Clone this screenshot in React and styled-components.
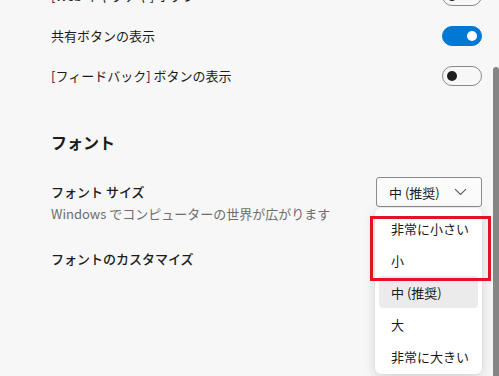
import React from "react";
import styled, { createGlobalStyle } from "styled-components";

const Global = createGlobalStyle`
  html, body { margin: 0; padding: 0; }
  body {
    background: #f7f7f7;
    font-family: "Noto Sans CJK JP", "Noto Sans", sans-serif;
    color: #1b1b1b;
    overflow: hidden;
  }
`;

const Page = styled.div`
  position: relative;
  width: 499px;
  height: 376px;
  overflow: hidden;
  box-sizing: border-box;
  padding: 0 17px 0 51px;
`;

const Scrolled = styled.div`
  margin-top: -24px;
`;

const Row = styled.div`
  display: flex;
  align-items: center;
  justify-content: space-between;
  height: 40px;
`;

const Label = styled.span`
  font-size: 13px;
  line-height: 20px;
  font-weight: ${(p) => (p.$strong ? 500 : 400)};
`;

const Toggle = styled.div`
  position: relative;
  width: 40px;
  height: 20px;
  box-sizing: border-box;
  border-radius: 10px;
  background: ${(p) => (p.$on ? "#0078d4" : "transparent")};
  border: 1px solid ${(p) => (p.$on ? "#0078d4" : "#8a8a8a")};
  &::after {
    content: "";
    position: absolute;
    top: 4px;
    left: ${(p) => (p.$on ? "24px" : "4px")};
    width: 10px;
    height: 10px;
    border-radius: 50%;
    background: ${(p) => (p.$on ? "#ffffff" : "#1f1f1f")};
  }
`;

const Heading = styled.h2`
  margin: 30px 0 0;
  font-size: 16px;
  line-height: 32px;
  font-weight: 600;
`;

const SettingRow = styled.div`
  display: flex;
  justify-content: space-between;
  align-items: flex-start;
  margin-top: 19px;
`;

const TextCol = styled.div`
  display: flex;
  flex-direction: column;
  padding-top: 5px;
`;

const Desc = styled.span`
  font-size: 13px;
  line-height: 24px;
  color: #6e6e6e;
`;

const SelectWrap = styled.div`
  position: relative;
  z-index: 2;
`;

const SelectButton = styled.div`
  display: flex;
  align-items: center;
  justify-content: space-between;
  box-sizing: border-box;
  width: 106px;
  height: 30px;
  padding: 0 14px 0 12px;
  background: #fbfbfb;
  border: 1px solid #8c8c8c;
  border-radius: 3px;
  font-size: 13px;
`;

const Menu = styled.ul`
  position: absolute;
  top: 31px;
  right: 0;
  width: 107px;
  margin: 0;
  padding: 4px 0 2px;
  list-style: none;
  background: #ffffff;
  border-radius: 6px;
  box-shadow: 0 4px 14px rgba(0, 0, 0, 0.14), 0 0 2px rgba(0, 0, 0, 0.08);
`;

const Item = styled.li`
  display: flex;
  align-items: center;
  height: 32px;
  margin: 0 4px;
  padding-left: 12px;
  border-radius: 4px;
  font-size: 13px;
  background: ${(p) => (p.$selected ? "#ebebeb" : "transparent")};
`;

const PlainRow = styled.div`
  margin-top: 19px;
`;

const Highlight = styled.div`
  position: absolute;
  left: 370px;
  top: 216px;
  width: 121px;
  height: 65px;
  box-sizing: border-box;
  border: 3px solid #e81123;
  z-index: 3;
`;

const ScrollThumb = styled.div`
  position: absolute;
  right: 0;
  top: 67px;
  bottom: 0;
  width: 6px;
  background: #858585;
  border-radius: 3px 3px 0 0;
`;

const Chevron = () => (
  <svg width="13" height="8" viewBox="0 0 13 8">
    <path d="M1 1.2 L6.5 6.5 L12 1.2" fill="none" stroke="#5a5a5a" strokeWidth="1.1" />
  </svg>
);

const sizes = ["非常に小さい", "小", "中 (推奨)", "大", "非常に大きい"];

export default function App() {
  return (
    <>
      <Global />
      <Page>
        <Scrolled>
          <Row>
            <Label>[Web キャプチャ] ボタン</Label>
            <Toggle />
          </Row>
          <Row>
            <Label>共有ボタンの表示</Label>
            <Toggle $on />
          </Row>
          <Row>
            <Label>[フィードバック] ボタンの表示</Label>
            <Toggle />
          </Row>
          <Heading>フォント</Heading>
          <SettingRow>
            <TextCol>
              <Label $strong>フォント サイズ</Label>
              <Desc>Windows でコンピューターの世界が広がります</Desc>
            </TextCol>
            <SelectWrap>
              <SelectButton>
                <span>中 (推奨)</span>
                <Chevron />
              </SelectButton>
              <Menu>
                {sizes.map((s) => (
                  <Item key={s} $selected={s === "中 (推奨)"}>
                    {s}
                  </Item>
                ))}
              </Menu>
            </SelectWrap>
          </SettingRow>
          <PlainRow>
            <Label $strong>フォントのカスタマイズ</Label>
          </PlainRow>
        </Scrolled>
        <Highlight />
        <ScrollThumb />
      </Page>
    </>
  );
}
